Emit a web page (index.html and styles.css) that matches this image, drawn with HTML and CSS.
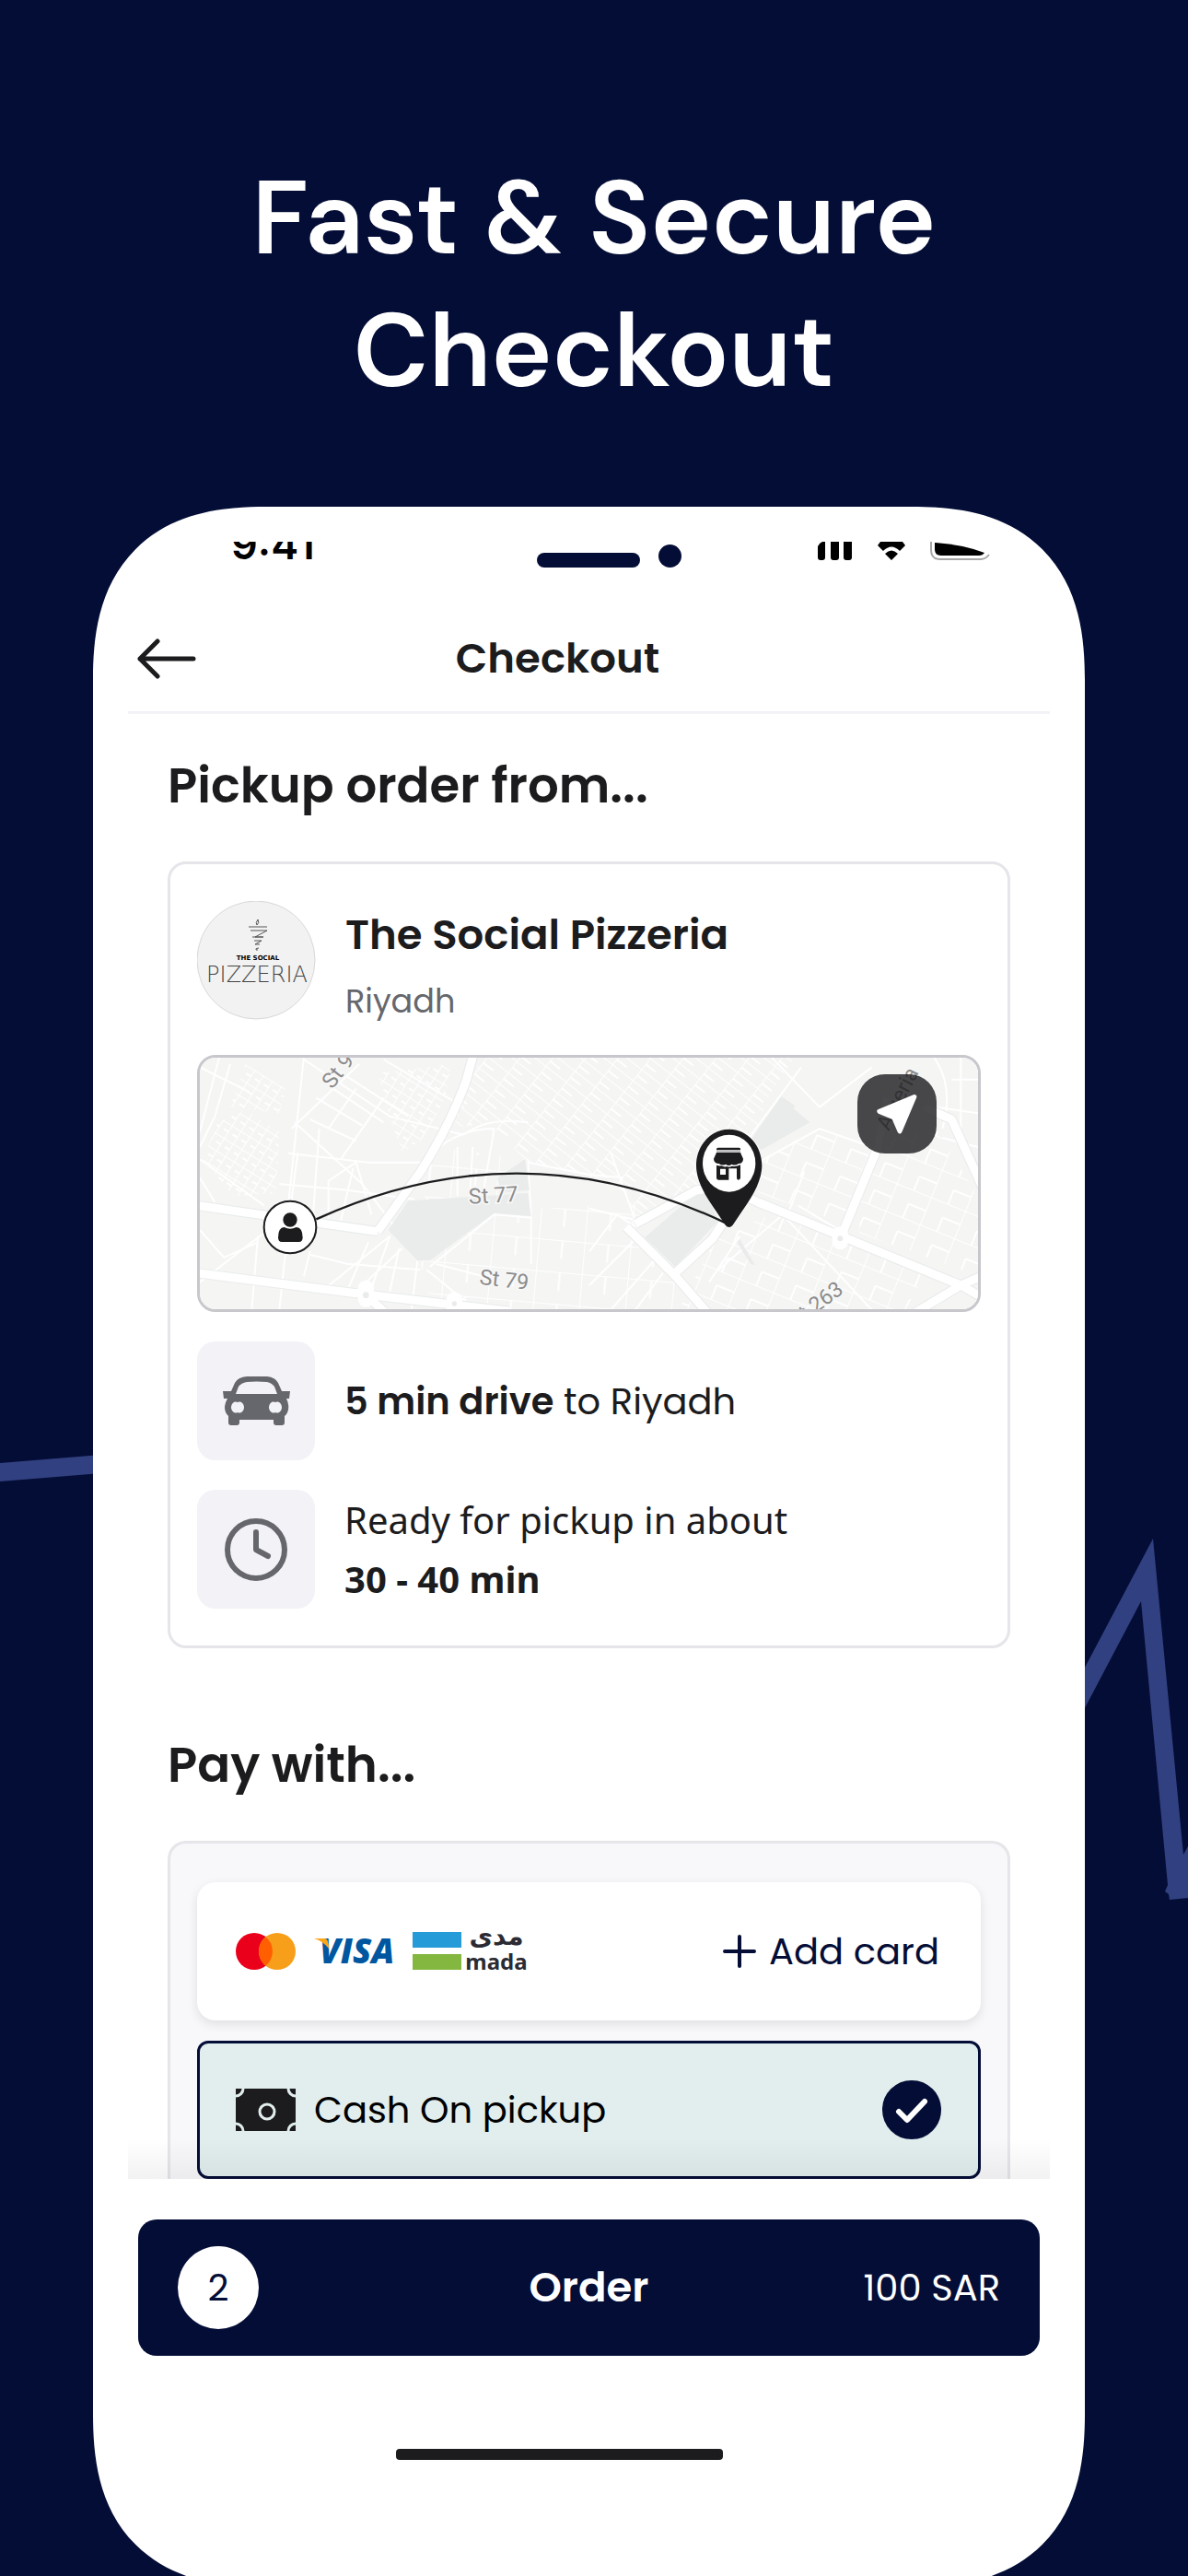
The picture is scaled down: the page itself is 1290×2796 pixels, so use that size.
FILE: index.html
```html
<!DOCTYPE html>
<html lang="en">
<head>
  <meta charset="UTF-8" />
  <meta name="viewport" content="width=device-width, initial-scale=1" />
  <title>Fast & Secure Checkout</title>
  <link rel="stylesheet" href="styles.css">
</head>
<body>

  <div class="stage">
    <svg class="trace" viewBox="0 0 1290 2796" aria-hidden="true">
      <path d="M0 1588L110 1579V1599L0 1608z"/>
      <path d="M1170 1825L1252 1670L1285 2013L1290 2004V2060L1270 2062L1269 2056L1265 2053L1268 2046L1239 1738L1170 1869z"/>
    </svg>

    <h1 class="headline">Fast &amp; Secure<br>Checkout</h1>

    <div class="phone">
      <div class="status-bar">
        <span class="time">9:41</span>
        <div class="notch"><span class="speaker"></span><span class="camera"></span></div>
        <svg class="status-icons" viewBox="0 0 188 20" aria-hidden="true">
          <path d="M1 5Q3 1 6 0H9V17Q9 20 6 20H4Q1 20 1 17zM15 0H24V17Q24 20 21 20H18Q15 20 15 17zM29 0H38V17Q38 20 35 20H32Q29 20 29 17z"/>
          <path d="M69 0H93L96 4L90 10Q81 1 72 10L66 4zM81 20L74 13Q81 6 88 13z"/>
          <path d="M128 1Q158 3 182 12Q180 15 176 15H135Q128 15 128 8z"/>
          <path class="shell" d="M124 0V9Q124 19 134 19H178Q183 19 187 14"/>
        </svg>
      </div>

      <header class="top-bar">
        <button class="back" type="button" aria-label="Back">
          <svg viewBox="0 0 64 44"><path d="M61 22H3M22 3L3 22L22 41"/></svg>
        </button>
        <h2 class="title">Checkout</h2>
      </header>

      <main class="content">
        <h2 class="section-title">Pickup order from...</h2>

        <section class="card">
          <div class="store">
            <svg class="logo" viewBox="0 0 129 129" role="img" aria-label="The Social Pizzeria">
              <circle cx="64" cy="64" r="64"/>
              <path class="ink" d="M66 20Q63 24 65 26Q68 24 66 20M56 28H76M58 32H76L63 39H72M60 39H72M62 43H70L63 47H68M67 51Q63 51 64 53H66"/>
              <text class="logo-small" x="66" y="64">THE SOCIAL</text>
              <text class="logo-big" x="65" y="88">PIZZERIA</text>
            </svg>
            <div class="store-info">
              <h3 class="store-name">The Social Pizzeria</h3>
              <p class="store-city">Riyadh</p>
            </div>
          </div>

          <div class="map">
            <svg class="map-art" viewBox="141 669 2535 819" preserveAspectRatio="xMidYMid slice" role="img" aria-label="Route to the store">
              <defs>
                <pattern id="blocks" width="46" height="84" patternUnits="userSpaceOnUse" patternTransform="rotate(-52)">
                  <path class="lane" d="M0 0H46M0 0V84M23 0V42"/>
                </pattern>
                <pattern id="tight" width="34" height="48" patternUnits="userSpaceOnUse" patternTransform="rotate(32)">
                  <path class="lane" d="M0 0H34M0 0V48M17 24H34"/>
                </pattern>
                <pattern id="wide" width="150" height="104" patternUnits="userSpaceOnUse" patternTransform="rotate(5)">
                  <path class="lane" d="M0 0H150M0 0V104M78 0V60"/>
                </pattern>
                <pattern id="tilted" width="120" height="96" patternUnits="userSpaceOnUse" patternTransform="rotate(22)">
                  <path class="lane" d="M0 0H120M0 0V96M60 48H120M60 48V96"/>
                </pattern>
              </defs>

              <rect class="land" x="100" y="640" width="2620" height="880"/>

              <path fill="url(#blocks)" d="M1060 665H2080L1990 800L1900 1070L1700 1110L1570 1200L1500 1080L1210 1010L1080 880L960 900z"/>
              <path fill="url(#tight)" d="M200 880L290 840L400 910L390 1110L250 1120L150 1000zM720 720L960 690L940 800L870 930L800 980L760 860z"/>
              <path fill="url(#tight)" d="M290 690L420 770L400 850L240 830z"/>
              <path fill="url(#wide)" d="M960 1180L1570 1140L1640 1300L1780 1490H900L860 1340zM900 960L1210 1000V1130L870 1130z"/>
              <path fill="url(#tilted)" d="M1960 1010L2140 900L2330 960L2250 1210L1960 1110zM2290 960L2540 900L2676 1120V1380L2290 1240zM1830 1240L2040 1170L2500 1380L2440 1490H1700z"/>

              <path class="lane" d="M141 700L300 780M205 665L141 910M240 690L190 860L141 960M480 665L430 1140M480 675L760 860L1000 920M450 880L670 1080L860 1330M440 900L660 690M430 980L690 1010L860 1010M520 800L670 890M560 760L740 880M500 870L650 940M620 730L820 860M740 675L1000 830M560 900L650 770M600 1000L740 800M400 1080L620 1100L840 1130M440 1130L460 980M510 1180L530 900M560 1190V1070L650 1010L700 1180M600 1200L640 1030M141 1000L350 1150M141 1060L190 1140M141 1230L220 1320L330 1270M141 1400L350 1240M310 1490L330 1250M400 1490L420 1300M480 1380L500 1300M500 1310L620 1340L860 1360M550 1420L760 1250M620 1430L690 1270M650 1430L800 1290M700 1420L760 1250M760 1430L790 1290M850 1330L830 1490M880 1360L1040 1490M890 1350L1100 1180L1220 1190L1210 1000M1220 1190V1340M910 1340L1060 1380"/>
              <path class="lane" d="M1000 920Q1080 860 1210 880M920 960Q1000 900 1100 900M1100 900L1060 1130M980 960V1120M1030 960L1020 1130M1210 1010L1410 1050L1520 1060M1410 1160L1570 1200M1480 980L1560 1200M1410 1300L1500 1180L1560 1220M1410 1410L1560 1260M1480 1490L1620 1330M1560 1490L1650 1370M2000 665L2160 830L2330 700M1930 930L2100 700M1960 1010L2160 900L2330 960M2060 1170L2110 1040M2090 1150L2240 1240M2530 665Q2600 760 2560 900M2540 830L2676 850M2620 665V900M2676 740L2590 740M2560 930L2676 960M1830 1360L2040 1180L2330 1490M1900 1250L1800 1400"/>

              <path class="park" d="M820 1135L1210 1110L1220 1185L1100 1175L890 1330H850L755 1230zM1110 1060L1200 1000L1215 1100L1120 1110z"/>
              <path class="park" d="M1590 1255L1780 1090L1830 1200L1690 1350zM1940 930L2035 795L2080 825L2075 835L2128 880L1970 970zM1890 1270L1900 1260L1950 1345L1935 1340z"/>

              <path class="road-edge" d="M130 1150L720 1235M720 1235L860 1040Q960 880 1010 740L1030 665M130 1370L680 1440L1150 1495M680 1440L740 1495M1530 1220L1690 1380L1795 1500M1560 1210L1760 1100L1850 1090M1690 1370L1810 1260L1850 1200M1850 1090L1960 1140L2230 1250L2620 1410L2690 1450M2230 1250L2350 960L2380 800M2500 830L2590 870L2690 1090M2620 1410L2700 1375M2620 1410L2470 1500"/>
              <path class="road" d="M130 1150L720 1235M720 1235L860 1040Q960 880 1010 740L1030 665M130 1370L680 1440L1150 1495M680 1440L740 1495M1530 1220L1690 1380L1795 1500M1560 1210L1760 1100L1850 1090M1690 1370L1810 1260L1850 1200M1850 1090L1960 1140L2230 1250L2620 1410L2690 1450M2230 1250L2350 960L2380 800M2500 830L2590 870L2690 1090M2620 1410L2700 1375M2620 1410L2470 1500"/>
              <path class="junction" d="M682 1420V1455M970 1458V1482M2227 1245V1268"/>
              <circle class="islet" cx="682" cy="1442" r="10"/>
              <circle class="islet" cx="970" cy="1470" r="8"/>
              <circle class="islet" cx="2227" cy="1258" r="9"/>

              <text class="street" transform="translate(572 774) rotate(-52)">St 91</text>
              <text class="street" transform="translate(1018 1145) rotate(-3)">St 77</text>
              <text class="street" transform="translate(1050 1406) rotate(7)">St 79</text>
              <text class="street" transform="translate(2080 1550) rotate(-36)">St 263</text>
              <text class="street" transform="translate(2385 910) rotate(-63)">Algeria</text>

              <path class="route" d="M520 1195Q1188 890 1855 1208"/>

              <circle class="me" cx="435" cy="1221" r="85"/>
              <circle class="solid" cx="435" cy="1197" r="23"/>
              <path class="solid" d="M396 1255Q396 1222 416 1221Q435 1231 455 1221Q476 1222 476 1255Q476 1269 464 1269H408Q396 1269 396 1255z"/>

              <path class="solid" d="M1865 902C1925 902 1972 955 1972 1020C1972 1075 1935 1130 1905 1172L1877 1214Q1865 1228 1853 1214L1825 1172C1795 1130 1758 1075 1758 1020C1758 955 1805 902 1865 902z"/>
              <ellipse class="paper" cx="1865" cy="1013" rx="86" ry="93"/>
              <path class="solid" d="M1824 966Q1825 962 1830 962H1897Q1902 962 1902 966V969H1824z"/>
              <path class="shade" d="M1824 970H1902V977H1824z"/>
              <path class="solid" d="M1824 978H1902L1911 998Q1911 1013 1896 1014Q1884 1022 1874 1016Q1864 1024 1854 1016Q1843 1022 1832 1014Q1815 1013 1815 998z"/>
              <path class="solid" d="M1824 1019Q1832 1022 1840 1021Q1850 1026 1858 1023Q1866 1027 1874 1022Q1886 1026 1902 1018V1060Q1902 1067 1895 1067Q1890 1067 1890 1060V1030H1864V1067H1830Q1824 1067 1824 1060zM1836 1031V1050H1854V1031z" fill-rule="evenodd"/>
            </svg>
            <button class="locate" type="button" aria-label="Open directions">
              <svg viewBox="0 0 256 256"><path d="M184 73L71 120L118 140L137 184z"/></svg>
            </button>
          </div>

          <ul class="facts">
            <li class="fact">
              <span class="tile">
                <svg class="car" viewBox="0 0 73 53" aria-hidden="true">
                  <path fill-rule="evenodd" d="M9 16L13 7Q16 1 26 0Q37 -1 48 0Q57 1 60 7L64 16H73L72 24H69Q72 30 71 36Q70 41 67 43V50Q67 53 64 53H58Q55 53 55 50V47H18V50Q18 53 15 53H9Q6 53 6 50V43Q2 39 2 34Q2 29 5 24H1L0 16zM14 19H59L56 11Q53 7 48 6Q36 5 26 6Q20 7 17 11zM16 28A5 6 0 1 0 16 39A5 6 0 1 0 16 28M57 28A5 6 0 1 0 57 39A5 6 0 1 0 57 28"/>
                </svg>
              </span>
              <p class="fact-text"><b>5 min drive</b> to Riyadh</p>
            </li>
            <li class="fact">
              <span class="tile">
                <svg class="clock" viewBox="0 0 68 68" aria-hidden="true">
                  <circle cx="34" cy="34" r="31"/><path d="M34 15V34L47 41"/>
                </svg>
              </span>
              <p class="fact-text ready">Ready for pickup in about<br><b>30 - 40 min</b></p>
            </li>
          </ul>
        </section>

        <h2 class="section-title pay-title">Pay with...</h2>

        <section class="card pay">
          <div class="option">
            <svg class="mastercard" viewBox="0 0 65 40" role="img" aria-label="Mastercard">
              <circle cx="20" cy="20" r="20" fill="#eb001b"/>
              <circle cx="45" cy="20" r="20" fill="#f79f1a"/>
              <path d="M32.500 4.400A20 20 0 0 1 32.500 35.600A20 20 0 0 1 32.500 4.400z" fill="#ff5f00"/>
            </svg>
            <svg class="visa" viewBox="0 0 87 30" role="img" aria-label="Visa">
              <text x="6" y="28">VISA</text>
              <path d="M0 1H12Q16 2 16 12Q10 4 0 1z"/>
            </svg>
            <svg class="mada" viewBox="0 0 125 44" role="img" aria-label="mada">
              <path d="M0 1H53V18H0z" fill="#259bd7"/>
              <path d="M0 25H53V42H0z" fill="#84b740"/>
              <text class="mada-ar" x="91" y="15">مدى</text>
              <text class="mada-en" x="91" y="42">mada</text>
            </svg>
            <button class="add-card" type="button">
              <svg viewBox="0 0 36 36" aria-hidden="true"><path d="M18 2V34M2 18H34"/></svg>
              Add card
            </button>
          </div>

          <label class="option selected">
            <svg class="cash" viewBox="0 0 65 46" aria-hidden="true">
              <path d="M0 0H65V46H0z"/>
              <g>
                <circle cx="34" cy="25" r="8"/>
                <circle cx="0" cy="0" r="8"/><circle cx="65" cy="0" r="8"/>
                <circle cx="0" cy="46" r="8"/><circle cx="65" cy="46" r="8"/>
              </g>
            </svg>
            <span>Cash On pickup</span>
            <span class="check">
              <input type="radio" name="payment" value="cash" checked>
              <svg viewBox="0 0 64 64" aria-hidden="true"><path d="M18 34L27 43L46 23"/></svg>
            </span>
          </label>
        </section>
      </main>

      <footer class="bottom-bar">
        <button class="order" type="button">
          <span class="count">2</span>
          <span class="order-label">Order</span>
          <span class="total">100 SAR</span>
        </button>
        <div class="home-indicator"></div>
      </footer>
    </div>
  </div>

</body>
</html>
```
FILE: styles.css
```css
:root {
  --navy: #040d36;
  --ink: #1c1c1e;
  --grey: #66676c;
  --line: #e5e5ea;
  --tile: #f2f2f7;
}

* {
  box-sizing: border-box;
}

body {
  margin: 0;
  background: var(--navy);
  color: var(--ink);
  font-family: "Poppins", "Inter", sans-serif;
  font-size: 40px;
}

h1, h2, h3, p, ul {
  margin: 0;
  padding: 0;
}

button {
  border: none;
  padding: 0;
  background: none;
  color: inherit;
  font: inherit;
  cursor: pointer;
}

svg {
  display: block;
  flex-shrink: 0;
}

.stage {
  position: relative;
  min-height: 100vh;
  overflow: hidden;
}

.trace {
  position: absolute;
  top: 0;
  left: 0;
  width: 100%;
  fill: #314080;
}

.headline {
  position: relative;
  padding-top: 165px;
  color: white;
  font-family: "DM Sans", "Inter", sans-serif;
  font-size: 112px;
  font-weight: 600;
  line-height: 144px;
  text-align: center;
}

/* phone frame */
.phone {
  position: relative;
  margin: 97px 112px -12px 101px;
  padding: 38px 38px 138px;
  background: white;
  border-radius: 162px;
}

@supports (corner-shape: superellipse(1.3)) {
  .phone {
    border-radius: 188px;
    corner-shape: superellipse(1.3);
  }
}

.status-bar {
  display: flex;
  align-items: flex-start;
  height: 70px;
  padding: 0 65px 0 112px;
  overflow: hidden;
}

.time {
  margin-top: -18px;
  color: black;
  font-family: "Inter", sans-serif;
  font-size: 45px;
  font-weight: 600;
  line-height: 42px;
}

.notch {
  display: flex;
  align-items: flex-end;
  gap: 20px;
  margin-left: auto;
  padding-top: 3px;
}

.speaker {
  width: 112px;
  height: 16px;
  border-radius: 8px;
  background: var(--navy);
}

.camera {
  width: 25px;
  height: 25px;
  border-radius: 50%;
  background: var(--navy);
}

.status-icons {
  width: 188px;
  margin-left: 147px;
}

.shell {
  fill: none;
  stroke: #a6a6a6;
  stroke-width: 2;
}

.top-bar {
  display: flex;
  align-items: center;
  height: 117px;
  padding: 0 142px 0 10px;
  border-bottom: 3px solid var(--tile);
}

.back svg {
  width: 64px;
  fill: none;
  stroke: var(--ink);
  stroke-width: 5;
  stroke-linecap: round;
  stroke-linejoin: round;
}

.title {
  flex: 1;
  font-size: 45px;
  font-weight: 600;
  text-align: center;
}

.content {
  padding: 48px 43px 0;
}

.section-title {
  margin-bottom: 52px;
  font-size: 53px;
  font-weight: 600;
  line-height: 60px;
}

.pay-title {
  margin-top: 97px;
}

.card {
  padding: 40px 29px;
  border: 3px solid var(--line);
  border-radius: 20px;
}

/* store */
.store {
  display: flex;
  gap: 32px;
}

.logo {
  width: 129px;
  height: 129px;
}

.logo circle {
  fill: #f2f2f2;
  stroke: #d8d8d8;
}

.ink {
  fill: none;
  stroke: #555;
}

.logo-small {
  font-family: "DejaVu Sans", sans-serif;
  font-size: 7px;
  font-weight: bold;
  text-anchor: middle;
}

.logo-big {
  fill: #444;
  font-family: "DejaVu Sans", sans-serif;
  font-size: 24px;
  font-weight: 200;
  text-anchor: middle;
}

.store-info {
  display: flex;
  flex-direction: column;
  justify-content: flex-end;
  gap: 22px;
}

.store-name {
  font-size: 45px;
  font-weight: 600;
  line-height: 60px;
}

.store-city {
  color: var(--grey);
  font-size: 35px;
  line-height: 40px;
}

/* map */
.map {
  position: relative;
  height: 279px;
  margin: 38px 0 32px;
  border: 3px solid #c7c7cc;
  border-radius: 20px;
  overflow: hidden;
}

.map-art {
  width: 100%;
  height: 100%;
}

.land {
  fill: #f5f5f4;
}

.park, .islet {
  fill: #eaeceb;
}

.lane {
  fill: none;
  stroke: white;
  stroke-width: 6;
}

.road-edge, .road, .junction {
  fill: none;
  stroke-linejoin: round;
}

.road-edge {
  stroke: #e8edeb;
  stroke-width: 34;
}

.road {
  stroke: white;
  stroke-width: 27;
}

.junction {
  stroke: white;
  stroke-width: 52;
  stroke-linecap: round;
}

.street {
  fill: #8c8c8c;
  stroke: #f8f8f8;
  stroke-width: 10;
  paint-order: stroke;
  font-family: Roboto, sans-serif;
  font-size: 70px;
}

.route {
  fill: none;
  stroke: var(--ink);
  stroke-width: 7;
}

.me {
  fill: white;
  stroke: var(--ink);
  stroke-width: 6;
}

.solid {
  fill: var(--ink);
}

.paper {
  fill: white;
}

.shade {
  fill: #b5b5b8;
}

.locate {
  position: absolute;
  top: 18px;
  right: 45px;
  width: 86px;
  height: 86px;
  border-radius: 30px;
  background: rgba(28, 28, 30, 0.8);
}

.locate path {
  fill: white;
  stroke: white;
  stroke-width: 15;
  stroke-linejoin: round;
}

/* pickup facts */
.facts {
  display: flex;
  flex-direction: column;
  gap: 32px;
  list-style: none;
}

.fact {
  display: flex;
  align-items: center;
  gap: 32px;
}

.tile {
  display: flex;
  align-items: center;
  justify-content: center;
  width: 128px;
  height: 129px;
  border-radius: 20px;
  background: var(--tile);
}

.car {
  width: 73px;
  fill: var(--grey);
}

.clock {
  width: 68px;
  fill: none;
  stroke: var(--grey);
  stroke-width: 6;
  stroke-linecap: round;
  stroke-linejoin: round;
}

.fact-text {
  line-height: 64px;
}

.fact-text b {
  font-weight: 600;
}

.ready {
  font-family: "Noto Sans", sans-serif;
}

.ready b {
  font-weight: 700;
}

/* payment */
.pay {
  display: flex;
  flex-direction: column;
  gap: 22px;
  padding-top: 42px;
  padding-bottom: 0;
  border-bottom: none;
  border-radius: 20px 20px 0 0;
  background: #f8f8fb;
}

.option {
  display: flex;
  align-items: center;
  height: 150px;
  padding: 0 45px 0 42px;
  border-radius: 20px;
  background: white;
  box-shadow: 0 4px 12px rgba(0, 0, 0, 0.1);
}

.selected {
  gap: 20px;
  padding: 0 40px 0 39px;
  border: 3px solid var(--navy);
  border-radius: 12px;
  background: #e1eeed;
  box-shadow: none;
  color: black;
}

.mastercard {
  width: 65px;
}

.visa {
  width: 87px;
  margin: 0 20px;
}

.visa text {
  fill: #00579f;
  font-family: "Open Sans", sans-serif;
  font-size: 37px;
  font-style: italic;
  font-weight: 800;
}

.visa path {
  fill: #faa61a;
}

.mada {
  width: 125px;
  overflow: visible;
}

.mada text {
  fill: #2b2b33;
  font-weight: bold;
  text-anchor: middle;
}

.mada-ar {
  font-family: "DejaVu Sans", sans-serif;
  font-size: 28px;
}

.mada-en {
  font-family: "Noto Sans", sans-serif;
  font-size: 24px;
}

.add-card {
  display: flex;
  align-items: center;
  gap: 14px;
  margin-left: auto;
  color: var(--navy);
}

.add-card svg {
  width: 36px;
  stroke: var(--navy);
  stroke-width: 4;
  stroke-linecap: round;
}

.cash {
  width: 65px;
  fill: var(--ink);
}

.cash g {
  stroke: #e1eeed;
  stroke-width: 3;
}

.check {
  display: grid;
  width: 64px;
  height: 64px;
  margin-left: auto;
}

.check input, .check svg {
  grid-area: 1 / 1;
  width: 64px;
  height: 64px;
  margin: 0;
}

.check input {
  appearance: none;
  border: 3px solid var(--navy);
  border-radius: 50%;
}

.check input:checked {
  background: var(--navy);
}

.check svg {
  fill: none;
  stroke: white;
  stroke-width: 6;
  stroke-linecap: round;
  stroke-linejoin: round;
}

/* order bar */
.bottom-bar {
  position: relative;
  padding: 44px 11px 0;
  background: white;
}

.bottom-bar::before {
  content: '';
  position: absolute;
  bottom: 100%;
  left: 0;
  right: 0;
  height: 44px;
  background: linear-gradient(transparent, rgba(0, 0, 0, 0.05));
}

.order {
  display: grid;
  grid-template-columns: 1fr auto 1fr;
  align-items: center;
  width: 100%;
  height: 148px;
  padding: 0 43px;
  border-radius: 20px;
  background: var(--navy);
  color: white;
}

.count {
  display: flex;
  align-items: center;
  justify-content: center;
  width: 88px;
  height: 90px;
  border-radius: 50%;
  background: white;
  color: var(--navy);
}

.order-label {
  font-size: 45px;
  font-weight: 600;
}

.total {
  text-align: right;
}

.home-indicator {
  width: 355px;
  height: 12px;
  margin: 101px 0 0 280px;
  border-radius: 4px;
  background: var(--ink);
}
```
